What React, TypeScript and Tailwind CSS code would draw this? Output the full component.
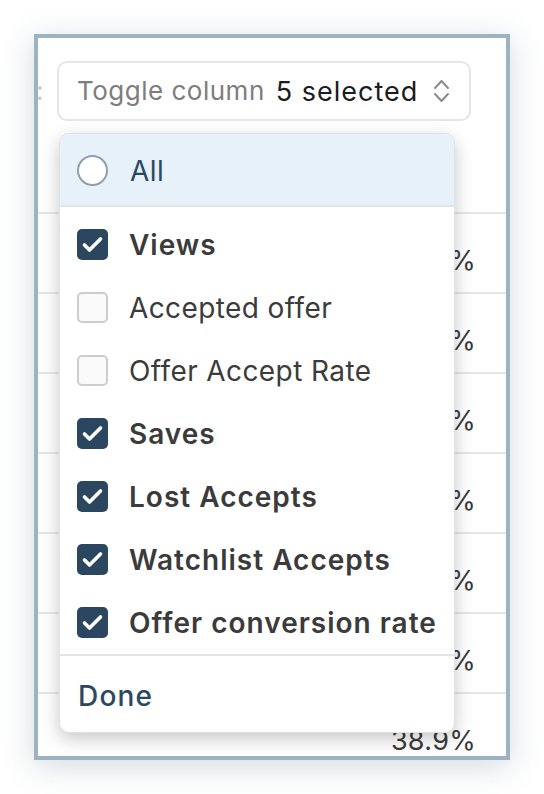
const columns: { label: string; checked: boolean }[] = [
  { label: 'Views', checked: true },
  { label: 'Accepted offer', checked: false },
  { label: 'Offer Accept Rate', checked: false },
  { label: 'Saves', checked: true },
  { label: 'Lost Accepts', checked: true },
  { label: 'Watchlist Accepts', checked: true },
  { label: 'Offer conversion rate', checked: true },
];

const rows = ['41.2%', '40.5%', '39.8%', '37.1%', '42.6%', '36.4%', '38.9%'];

function Checkbox({ checked }: { checked: boolean }) {
  if (checked) {
    return (
      <span className="flex items-center justify-center w-[31px] h-[31px] rounded-[5px] bg-[#2b4760] shrink-0">
        <svg width="31" height="31" viewBox="0 0 31 31" fill="none">
          <path d="M7.5 16l5 5L23.5 10" stroke="white" strokeWidth="3.6" strokeLinecap="round" strokeLinejoin="round" />
        </svg>
      </span>
    );
  }
  return <span className="w-[31px] h-[31px] rounded-[5px] border-2 border-[#cdcdcd] bg-[#fafafa] shrink-0" />;
}

function UpDown() {
  return (
    <svg width="17" height="26" viewBox="0 0 17 26" fill="none" className="ml-auto">
      <path d="M2 10l6.5-7 6.5 7M2 16l6.5 7 6.5-7" stroke="#8a8a8a" strokeWidth="2" strokeLinecap="round" strokeLinejoin="round" />
    </svg>
  );
}

export default function App() {
  return (
    <div className="w-[544px] h-[794px] bg-white pt-[34px] pl-[34px]" style={{ fontFamily: 'Inter, "Noto Sans", sans-serif' }}>
      <div className="relative w-[476px] h-[726px] border-4 border-[#9cb3c1] bg-white overflow-hidden shadow-[0_6px_30px_rgba(80,110,135,0.25)]">
        {/* header */}
        <div className="flex items-center h-[174px] pb-[91px] pt-[23px]">
          <span className="w-[21px] text-[26px] text-[#c8c8c8] leading-none -ml-[2px]">:</span>
          <div className="flex items-center w-[414px] h-[60px] rounded-[10px] border-2 border-[#e5e5e5] pl-[18px] pr-[19px] text-[26px] leading-none">
            <span className="text-[#7d7d7d] tracking-[0.5px]">Toggle column</span>
            <span className="ml-[11px] text-[27px] text-[#1c1c1c] tracking-[1px]">5 selected</span>
            <UpDown />
          </div>
        </div>

        {/* table behind */}
        <div className="flex flex-col">
          {rows.map((r) => (
            <div key={r} className="h-[80px] border-t-2 border-[#e6e6e6] flex justify-end pr-[30px] pt-[33px] text-[27px] tracking-[0.3px] leading-none text-[#3a3a3a]">
              {r}
            </div>
          ))}
        </div>

        {/* dropdown */}
        <div className="absolute left-[21px] top-[95px] w-[396px] h-[600px] rounded-[10px] border border-[#e2e2e2] bg-white shadow-[0_6px_18px_rgba(0,0,0,0.22)] overflow-hidden flex flex-col">
          <div className="flex items-center gap-[22px] h-[73px] bg-[#e7f1f9] pl-[17px] pt-[2px] border-b-2 border-[#e4e4e4] shrink-0">
            <span className="w-[31px] h-[31px] rounded-full border-2 border-[#8f9fab] bg-white shrink-0" />
            <span className="text-[28px] tracking-[0.5px] text-[#2a4862] leading-none">All</span>
          </div>
          <div className="flex flex-col pt-[6px] border-b-2 border-[#e4e4e4]">
            {columns.map((c) => (
              <div key={c.label} className="flex items-center gap-[21px] h-[63px] pl-[17px]">
                <Checkbox checked={c.checked} />
                <span
                  className={`text-[28px] leading-none text-[#3b3b3b] whitespace-nowrap ${
                    c.checked ? 'font-semibold tracking-[1px]' : 'tracking-[0.4px]'
                  }`}
                >
                  {c.label}
                </span>
              </div>
            ))}
          </div>
          <div className="flex items-center flex-1 pl-[18px] pt-[4px]">
            <span className="text-[28px] font-medium tracking-[1.2px] text-[#2a4862] leading-none">Done</span>
          </div>
        </div>
      </div>
    </div>
  );
}
